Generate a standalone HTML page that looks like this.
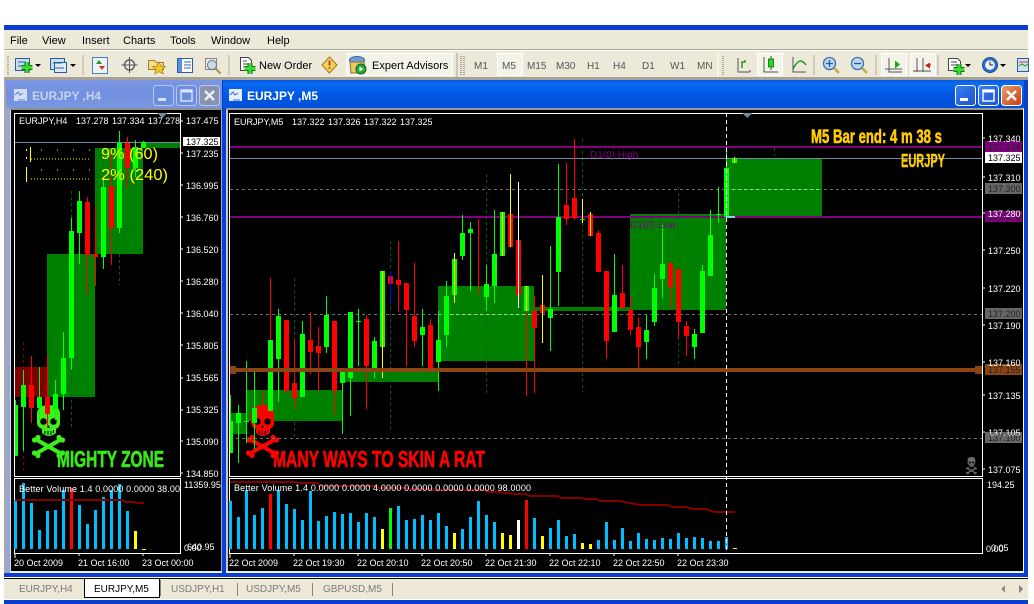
<!DOCTYPE html>
<html><head><meta charset="utf-8"><title>MetaTrader</title>
<style>
html,body{margin:0;padding:0;background:#fff;width:1034px;height:604px;overflow:hidden}
svg{display:block}
text{font-family:"Liberation Sans",sans-serif;white-space:pre}
.w{font-size:9px;fill:#fff}
.d{font-size:9px;fill:#222}
.m{font-size:11px;fill:#000}
.t{font-size:10px;fill:#555}
.tab{font-size:10px;fill:#7a7a7a}
.big{font-weight:bold}
</style></head><body>
<svg xmlns="http://www.w3.org/2000/svg" width="1034" height="604" viewBox="0 0 1034 604" shape-rendering="crispEdges">
<defs>
<linearGradient id="ga" x1="0" y1="0" x2="0" y2="1"><stop offset="0" stop-color="#0a58e0"/><stop offset=".12" stop-color="#0a6cf2"/><stop offset=".5" stop-color="#0058e6"/><stop offset="1" stop-color="#0450d8"/></linearGradient>
<linearGradient id="gi" x1="0" y1="0" x2="0" y2="1"><stop offset="0" stop-color="#7c96e2"/><stop offset=".5" stop-color="#7290e0"/><stop offset="1" stop-color="#7a96e0"/></linearGradient>
<linearGradient id="gb" x1="0" y1="0" x2="1" y2="1"><stop offset="0" stop-color="#3c7df0"/><stop offset="1" stop-color="#1a52d0"/></linearGradient>
<linearGradient id="gr" x1="0" y1="0" x2="1" y2="1"><stop offset="0" stop-color="#e8a070"/><stop offset="1" stop-color="#c83a10"/></linearGradient>
<clipPath id="c1"><rect x="15" y="114" width="165" height="362"/></clipPath>
<clipPath id="c2"><rect x="230" y="114" width="752" height="362"/></clipPath>
<g id="skull" shape-rendering="auto">
<path fill="currentColor" d="M5 9Q5 0 17 0Q28 0 28 9V18Q28 22 24 24V28Q17 34 10 28V24Q5 22 5 18Z"/>
<ellipse cx="11.500" cy="16.500" rx="3.200" ry="3.300" fill="#000"/><ellipse cx="21.500" cy="16.500" rx="3.200" ry="3.300" fill="#000"/>
<path d="M16.500 20l-1.500 3h3z" fill="#000"/>
<path d="M13 26v3M16 26v4M19 26v4M21.500 25v3" stroke="#000" stroke-width="1"/>
<path d="M5 35L28 48M28 35L5 48" stroke="currentColor" stroke-width="4"/>
<circle cx="2.500" cy="35" r="2.600" fill="currentColor"/><circle cx="6" cy="32.500" r="2.600" fill="currentColor"/>
<circle cx="30.500" cy="35" r="2.600" fill="currentColor"/><circle cx="27" cy="32.500" r="2.600" fill="currentColor"/>
<circle cx="2.500" cy="48" r="2.600" fill="currentColor"/><circle cx="6" cy="50.500" r="2.600" fill="currentColor"/>
<circle cx="30.500" cy="48" r="2.600" fill="currentColor"/><circle cx="27" cy="50.500" r="2.600" fill="currentColor"/>
</g>
</defs>

<rect width="1034" height="604" fill="#fff"/>
<!-- app frame -->
<rect x="4" y="25" width="1024" height="5" fill="#0a3ccf"/>
<rect x="4" y="30" width="1024" height="570" fill="#ece9d8"/>
<rect x="4" y="600" width="1024" height="4" fill="#0a3ccf"/>
<rect x="4" y="49" width="1024" height="1" fill="#aca899"/>
<rect x="4" y="50" width="1024" height="1" fill="#fff"/>
<!-- menu -->
<text class="m" x="10" y="44">File</text><text class="m" x="42" y="44">View</text><text class="m" x="82" y="44">Insert</text><text class="m" x="123" y="44">Charts</text><text class="m" x="170" y="44">Tools</text><text class="m" x="211" y="44">Window</text><text class="m" x="267" y="44">Help</text>

<!-- toolbar -->
<path d="M8 56v19M461 56v19M464 56v19M723 56v19" stroke="#aca899" stroke-width="2" stroke-dasharray="1 1"/>
<path d="M83 55v20M229 55v20M814 55v20M876 55v20M938 55v20" stroke="#b4b0a0"/>
<path d="M457 53v24" stroke="#aca899"/><path d="M718 52v25" stroke="#fff"/>
<rect x="346.500" y="53.500" width="106" height="22" fill="#f4f3ea" stroke="#fff"/>
<rect x="497.500" y="53.500" width="25" height="22" fill="#f4f3ea" stroke="#fff"/>
<rect x="757.500" y="53.500" width="25" height="22" fill="#f4f3ea" stroke="#fff"/>
<rect x="881.500" y="53.500" width="25" height="22" fill="#f4f3ea" stroke="#fff"/>
<rect x="910.500" y="53.500" width="25" height="22" fill="#f4f3ea" stroke="#fff"/>
<g shape-rendering="auto">
<!-- new chart -->
<rect x="15.500" y="58.500" width="14" height="12" fill="#c9ddf5" stroke="#25609f"/><path d="M18 62h8M18 66h8" stroke="#25609f"/>
<path d="M27 62v11M21.500 67.500h11" stroke="#0e7a0e" stroke-width="5"/><path d="M27 62v11M21.500 67.500h11" stroke="#3fd63f" stroke-width="3"/>
<path d="M35 64h6l-3 3z" fill="#000"/>
<!-- profiles -->
<rect x="50.500" y="58.500" width="14" height="11" fill="#c9ddf5" stroke="#25609f"/><rect x="54.500" y="62.500" width="12" height="10" fill="#dfeaf8" stroke="#25609f"/><path d="M53 63h9M55 68h9" stroke="#25609f"/>
<path d="M70 64h6l-3 3z" fill="#000"/>
<!-- market watch -->
<rect x="92.500" y="57.500" width="15" height="16" fill="#eef3fb" stroke="#4a80c0"/><path d="M96 64l3-4 3 4z" fill="#1a9a1a"/><path d="M99 70l3-4 3 4z" fill="#d83018" transform="rotate(180 102 68)"/>
<!-- crosshair -->
<circle cx="129.500" cy="65" r="5" fill="none" stroke="#666" stroke-width="1.500"/><path d="M129.500 57v16M121.500 65h16" stroke="#555"/>
<!-- folder star -->
<path d="M148.500 60.500h6l2 2h7v7h-15z" fill="#f5dd88" stroke="#a08030"/>
<path d="M159 62l2 4 4.500.5-3.300 3 1 4.500-4.200-2.300-4.200 2.300 1-4.500-3.300-3 4.500-.5z" fill="#f0c828" stroke="#a08020" stroke-width=".7"/>
<!-- navigator -->
<rect x="177.500" y="58.500" width="15" height="14" fill="#fff" stroke="#2c5fa5"/><rect x="178" y="59" width="4" height="13" fill="#5a90d8"/><path d="M184 62h7M184 65h7M184 68h7" stroke="#2c5fa5"/>
<!-- search chart -->
<rect x="205.500" y="58.500" width="11" height="11" fill="#dfe6f2" stroke="#888"/><circle cx="212" cy="65" r="4.500" fill="#c8daf0" stroke="#777"/><path d="M215.500 68.500l5 5" stroke="#a89040" stroke-width="2"/>
<!-- new order -->
<path d="M240.500 57.500h8l3 3v10h-11z" fill="#fff" stroke="#444"/><path d="M243 61h4M243 64h6M243 67h5" stroke="#444"/>
<path d="M250 63v11M244.500 68.500h11" stroke="#0e7a0e" stroke-width="5"/><path d="M250 63v11M244.500 68.500h11" stroke="#3fd63f" stroke-width="3"/>
<!-- diamond -->
<path d="M329.500 57l7.500 8-7.500 8-7.500-8z" fill="#f4d25a" stroke="#a07818"/><path d="M329.500 60.500v5" stroke="#c03010" stroke-width="1.800"/><circle cx="329.500" cy="68" r="1" fill="#c03010"/>
<!-- expert advisors -->
<ellipse cx="357" cy="60" rx="7.500" ry="3.500" fill="#6aa0d8" stroke="#386898"/><path d="M350 62h14l1 7-6 4h-8z" fill="#e8c868" stroke="#907030"/>
<circle cx="361" cy="69" r="5" fill="#28a838" stroke="#0a6a1a"/><path d="M359.500 66.500l4 2.500-4 2.500z" fill="#fff"/>
<!-- chart types -->
<path d="M738 58v14h12M750 70v2" stroke="#555" fill="none"/><path d="M742 68v-6h3v-2" stroke="#0a8a0a" stroke-width="1.300" fill="none"/>
<path d="M764 57v15h14" stroke="#555" fill="none"/><path d="M771 56v14" stroke="#444"/><rect x="768.500" y="59" width="5" height="8" fill="#22dc22" stroke="#0a6a0a" stroke-width=".8"/>
<path d="M793 57v15h13" stroke="#555" fill="none"/><path d="M793 69q5-9 8-8t5 4" stroke="#0a8a0a" stroke-width="1.200" fill="none"/>
<!-- zoom -->
<circle cx="829.500" cy="63.500" r="6" fill="#bcd8f4" stroke="#3a70b0" stroke-width="1.300"/><path d="M826 63.500h7M829.500 60v7" stroke="#2a5a90" stroke-width="1.300"/><path d="M834 68l5 5" stroke="#c8a848" stroke-width="2.500"/>
<circle cx="857.500" cy="63.500" r="6" fill="#bcd8f4" stroke="#3a70b0" stroke-width="1.300"/><path d="M854 63.500h7" stroke="#2a5a90" stroke-width="1.300"/><path d="M862 68l5 5" stroke="#c8a848" stroke-width="2.500"/>
<!-- shift -->
<path d="M889 58v14h13" stroke="#555" fill="none"/><path d="M885 69h17" stroke="#555"/><path d="M895 60.500l5 4-5 4z" fill="#1aa81a"/>
<path d="M917 58v14M923 58v14" stroke="#555"/><path d="M913 71h18" stroke="#555"/><path d="M931 64.500l-5-3v6z" fill="#c02020" transform="rotate(180 928 65)"/><path d="M926 65h5" stroke="#c02020"/>
<!-- new -->
<path d="M948.500 58.500h9l3 3v9h-12z" fill="#fff" stroke="#444"/><path d="M951 62h6M951 65h6" stroke="#444"/><path d="M959 64v11M953.500 69.500h11" stroke="#0e7a0e" stroke-width="5"/><path d="M959 64v11M953.500 69.500h11" stroke="#3fd63f" stroke-width="3"/>
<path d="M965 64h6l-3 3z" fill="#000"/>
<!-- clock -->
<circle cx="990" cy="65" r="7.500" fill="#2a70c8" stroke="#184a90"/><circle cx="990" cy="65" r="4.800" fill="#eef3fa"/><path d="M990 61.500V65h3" stroke="#222" fill="none"/>
<path d="M1000 64h6l-3 3z" fill="#000"/>
<rect x="1017.500" y="58.500" width="11" height="13" fill="#cfe0f5" stroke="#25609f"/><path d="M1019 62h9" stroke="#c04030"/><path d="M1019 66l3-2 3 2 3-2" stroke="#1a9a1a" fill="none"/>
</g>
<text class="m" x="259" y="69">New Order</text><text class="m" x="372" y="69">Expert Advisors</text>
<text class="t" x="474" y="69">M1</text><text class="t" x="502" y="69">M5</text><text class="t" x="527" y="69">M15</text><text class="t" x="556" y="69">M30</text><text class="t" x="587" y="69">H1</text><text class="t" x="613" y="69">H4</text><text class="t" x="642" y="69">D1</text><text class="t" x="670" y="69">W1</text><text class="t" x="697" y="69">MN</text>

<!-- mdi -->
<rect x="4" y="77" width="1024" height="3" fill="#a6a396"/>
<rect x="4" y="80" width="1024" height="493" fill="#9a9a9a"/>

<!-- left window -->
<rect x="4" y="80" width="218" height="497" fill="#94a6d8"/>
<rect x="4" y="86" width="2" height="491" fill="#a8a89e"/>
<rect x="6" y="80" width="216" height="28" fill="url(#gi)"/>
<rect x="10" y="108" width="212" height="2" fill="#8e8e8e"/>
<rect x="10" y="110" width="1" height="462" fill="#ddd"/>
<rect x="11" y="110" width="210" height="461" fill="#000"/>
<rect x="10" y="571" width="212" height="2" fill="#eee"/>
<g shape-rendering="auto">
<rect x="14" y="89" width="13" height="12" fill="#dfe8f8" opacity=".9"/><path d="M15 95l3-3 2 3 3-2M18 100h7" stroke="#5a80c8" fill="none"/>
<text x="32" y="100" class="big" font-size="12" fill="#c6d3f2" textLength="69" lengthAdjust="spacingAndGlyphs">EURJPY ,H4</text>
<rect x="153.500" y="85.500" width="20" height="20" rx="3" fill="#6c8edf" stroke="#b6c6ee"/><rect x="158" y="98" width="8" height="3" fill="#d8e2f6"/>
<rect x="176.500" y="85.500" width="20" height="20" rx="3" fill="#6c8edf" stroke="#b6c6ee"/><rect x="181" y="90" width="11" height="11" fill="none" stroke="#dde6f8" stroke-width="1.400"/><rect x="181" y="90" width="11" height="2.500" fill="#dde6f8"/>
<rect x="199.500" y="85.500" width="20" height="20" rx="3" fill="#8a93ad" stroke="#b6c6ee"/><path d="M205 91l9 9M214 91l-9 9" stroke="#eef1f8" stroke-width="2.400"/>
</g>

<!-- active window -->
<rect x="222" y="80" width="806" height="497" fill="#0a3fd0"/>
<rect x="223" y="80" width="801" height="28" fill="url(#ga)"/>
<rect x="226" y="108" width="798" height="2" fill="#999"/>
<rect x="226" y="110" width="2" height="462" fill="#c8c8c8"/>
<rect x="228" y="110" width="795" height="461" fill="#000"/>
<rect x="1023" y="108" width="1" height="465" fill="#fff"/>
<rect x="226" y="571" width="798" height="2" fill="#eee"/>
<g shape-rendering="auto">
<rect x="229" y="89" width="13" height="12" fill="#e8effa"/><path d="M230 95l3-3 2 3 3-2M233 100h7" stroke="#3a6ad0" fill="none"/>
<text x="247" y="100" class="big" font-size="12" fill="#fff" textLength="71" lengthAdjust="spacingAndGlyphs">EURJPY ,M5</text>
<rect x="955.500" y="85.500" width="20" height="20" rx="3" fill="url(#gb)" stroke="#fff"/><rect x="960" y="98" width="8" height="3" fill="#fff"/>
<rect x="978.500" y="85.500" width="20" height="20" rx="3" fill="url(#gb)" stroke="#fff"/><rect x="983" y="90" width="11" height="11" fill="none" stroke="#fff" stroke-width="1.400"/><rect x="983" y="90" width="11" height="2.500" fill="#fff"/>
<rect x="1001.500" y="85.500" width="20" height="20" rx="3" fill="url(#gr)" stroke="#fff"/><path d="M1007 91l9 9M1016 91l-9 9" stroke="#fff" stroke-width="2.400"/>
</g>

<!-- H4 chart -->
<g clip-path="url(#c1)">
<rect x="47" y="254" width="48" height="143" fill="#008000"/>
<rect x="95" y="148" width="48" height="106" fill="#008000"/>
<rect x="143" y="143" width="37" height="5" fill="#008000"/>
<rect x="15" y="367" width="32" height="30" fill="#7f0000"/>
<use href="#skull" x="32" y="405" color="#3cf01a" shape-rendering="auto"/>
<path d="M15 142.500h165" stroke="#778899"/>
<path d="M23.500 342V472" stroke="#800000" stroke-dasharray="3 3"/>
<path d="M71.500 191V218M71.500 358V430M119.500 254V285" stroke="#006400" stroke-dasharray="3 3"/>
<g fill="none">
<path stroke="#00ff00" d="M15.500 400V456M23.500 370V451M39.500 367V420M55.500 380V420M63.500 332V410M71.500 218V370M79.500 191V264M103.500 179V269M119.500 131V233M135.500 140V177M143.500 141V148"/>
<path stroke="#ff0000" d="M31.500 356V423M47.500 355V428M87.500 197V294M95.500 207V286M111.500 150V265M127.500 137V188"/>
<path stroke="#00ff00" stroke-width="5" d="M15.500 405V456M23.500 385V407M39.500 397V408M55.500 394V410M63.500 358V394M71.500 231V358M79.500 201V233M103.500 187V257M119.500 143V228M135.500 147V168M143.500 142V148"/>
<path stroke="#ff0000" stroke-width="5" d="M31.500 385V408M47.500 397V414M87.500 202V255M95.500 254V257M111.500 186V228M127.500 143V168"/>
</g>
</g>
<rect x="14.500" y="113.500" width="166" height="363" fill="none" stroke="#fff"/>
<path d="M157 113h10l-5 5z" fill="#778899"/>
<g shape-rendering="auto">
<text x="101" y="159" font-size="16" fill="#ffff00" textLength="57" lengthAdjust="spacingAndGlyphs">9% (60)</text>
<text x="101" y="180" font-size="16" fill="#ffff00" textLength="67" lengthAdjust="spacingAndGlyphs">2% (240)</text>
</g>
<path d="M30.500 147v15" stroke="#ffff00"/><path d="M26.500 149v2M26.500 157v2M26.500 167v15" stroke="#ffff00"/>
<path d="M31 159h60M31 179h60" stroke="#ffff00" stroke-dasharray="1 2"/>
<path d="M41 150h1M57 150h1M73 150h1M89 150h1M41 170h1M57 170h1M73 170h1M89 170h1" stroke="#ffff00"/>
<g shape-rendering="auto">
<text x="19" y="124" class="w">EURJPY,H4</text>
<text x="76" y="124" class="w">137.278</text><text x="112" y="124" class="w">137.334</text>
<text x="148" y="124" class="w" textLength="32" lengthAdjust="spacingAndGlyphs">137.278</text>
<text x="57" y="467" class="big" font-size="23" fill="#38e818" stroke="#38e818" stroke-width=".6" textLength="107" lengthAdjust="spacingAndGlyphs">MIGHTY ZONE</text>
</g>
<path d="M180 121h3M180 153h3M180 185h3M180 217h3M180 249h3M180 281h3M180 313h3M180 345h3M180 378h3M180 410h3M180 441h3M180 473h3" stroke="#fff"/>
<g shape-rendering="auto">
<text class="w" x="186" y="124">137.475</text><text class="w" x="186" y="157">137.235</text><text class="w" x="186" y="189">136.995</text><text class="w" x="186" y="221">136.760</text><text class="w" x="186" y="253">136.520</text><text class="w" x="186" y="285">136.280</text><text class="w" x="186" y="317">136.040</text><text class="w" x="186" y="349">135.805</text><text class="w" x="186" y="381">135.565</text><text class="w" x="186" y="413">135.325</text><text class="w" x="186" y="445">135.090</text><text class="w" x="186" y="477">134.850</text>
</g>
<rect x="183" y="137" width="37" height="9" fill="#fff"/>
<text class="d" x="186" y="145" shape-rendering="auto" style="fill:#000">137.325</text>
<!-- H4 volume -->
<rect x="14.500" y="478.500" width="166" height="75" fill="none" stroke="#fff"/>
<path fill="none" stroke-width="3" stroke="#00bfff" d="M15.500 500V549M23.500 483V549M31.500 503V549M39.500 530V549M47.500 511V549M55.500 510V549M63.500 490V549M79.500 505V549M87.500 524V549M95.500 510V549M103.500 497V549M111.500 490V549M119.500 484V549M127.500 511V549"/>
<path stroke="#ff0000" stroke-width="3" d="M71.500 488V549"/>
<path stroke="#ffff00" stroke-width="3" d="M135.500 531V549"/>
<path stroke="#ffff00" d="M142 549.500h4"/>
<path d="M15 500h107l3 2h10l2 1h7" fill="none" stroke="#800000" stroke-width="2"/>
<path d="M15 553v5M79 553v3M143 553v3" stroke="#fff"/>
<g shape-rendering="auto">
<text class="w" x="19" y="492" textLength="161" lengthAdjust="spacing">Better Volume 1.4 0.0000 0.0000 38.00</text>
<text class="w" x="184" y="488">11359.95</text>
<text class="w" x="187" y="550">640.95</text><text class="w" x="184" y="551">0.00</text>
<text class="w" x="14" y="566">20 Oct 2009</text><text class="w" x="78" y="566">21 Oct 16:00</text><text class="w" x="142" y="566">23 Oct 00:00</text>
</g>

<!-- M5 chart -->
<g clip-path="url(#c2)">
<g fill="#008000">
<rect x="230" y="413" width="17" height="21"/><rect x="247" y="390" width="95" height="31"/><rect x="342" y="372" width="96" height="10"/><rect x="438" y="286" width="96" height="75"/><rect x="534" y="307" width="96" height="4"/><rect x="630" y="214" width="96" height="96"/><rect x="726" y="159" width="96" height="57"/>
</g>
<use href="#skull" x="246" y="405" color="#ff0000" shape-rendering="auto"/>
<path d="M294.500 278V440M390.500 241V433M486.500 174V395M582.500 139V392M678.500 187V367M774.500 148V156" stroke="#006400" stroke-dasharray="3 3"/>
<path d="M230 147h752M230 217h752" stroke="#800080" stroke-width="2"/>
<path d="M230 158.500h752" stroke="#778899"/>
<path d="M230 189.500h752M230 314.500h752M230 438.500h752" stroke="#707070" stroke-dasharray="3 3"/>
<path d="M726 189.500h96M438 314.500h96" stroke="#70ff70" stroke-dasharray="3 3"/>
<g fill="none">
<path stroke="#00ff00" d="M230.500 395V453M238.500 405V463M246.500 361V443M254.500 371V449M278.500 309V402M302.500 321V397M326.500 296V353M342.500 371V434M350.500 312V416M358.500 309V366M374.500 337V378M422.500 309V366M438.500 311V391M446.500 281V347M462.500 215V260M470.500 222V291M486.500 265V311M494.500 210V303M550.500 246V351M558.500 164V306M614.500 254V332M646.500 315V359M654.500 274V326M662.500 225V298M694.500 329V359M702.500 265V333M710.500 210V276M718.500 187V223M726.500 147V217M244 421.500h5M356 321.500h5M580 219.500h5M716 214.500h5"/>
<path stroke="#ff0000" d="M262.500 391V410M270.500 278V411M294.500 339V409M310.500 312V374M318.500 327V391M334.500 321V415M366.500 315V409M398.500 241V312M406.500 283V366M414.500 263V347M430.500 319V373M478.500 219V295M526.500 296V396M534.500 296V393M566.500 163V225M574.500 139V220M598.500 230V272M606.500 271V359M622.500 265V308M630.500 296V335M638.500 317V368M670.500 263V308M678.500 269V338M686.500 321V356"/>
<path stroke="#00ff00" stroke-width="5" d="M230.500 421V453M238.500 413V423M254.500 408V423M270.500 340V411M278.500 316V359M302.500 334V397M326.500 315V347M342.500 371V383M350.500 312V378M374.500 341V372M382.500 271V347M422.500 327V335M438.500 340V362M446.500 296V335M454.500 259V295M462.500 233V256M470.500 229V233M486.500 284V297M494.500 254V286M502.500 212V256M526.500 286V311M550.500 309V318M558.500 217V272M614.500 295V332M646.500 330V342M654.500 288V322M662.500 264V279M694.500 334V347M702.500 271V333M710.500 235V276M726.500 168V217M734.500 158V163"/>
<path stroke="#ff0000" stroke-width="5" d="M286.500 320V391M294.500 383V398M310.500 340V352M318.500 346V353M334.500 321V391M366.500 319V366M390.500 276V284M398.500 280V285M406.500 283V310M414.500 316V341M430.500 325V369M510.500 214V247M518.500 240V295M534.500 311V328M542.500 305V313M566.500 205V219M574.500 198V218M590.500 214V236M598.500 233V272M606.500 271V341M622.500 293V308M630.500 310V330M638.500 327V347M670.500 263V287M678.500 269V322M686.500 326V336"/>
<path stroke="#ffff00" d="M382.500 271V378M454.500 253V303M502.500 212V256M510.500 174V247M526.500 286V311M542.500 275V343M582.500 199V223M590.500 212V236M734.500 157V163"/>
<path stroke="#fff" d="M518.500 182V308"/><path stroke="#0000ff" d="M390.500 271V303"/>
<path stroke="#00ff00" d="M580 219.500h5"/>
<path d="M726 217h9" stroke="#87ceeb" stroke-width="2"/>
</g>
<path d="M230 370h752" stroke="#8b4513" stroke-width="4"/>
<rect x="230" y="366" width="6" height="8" fill="#8b4513"/><rect x="975" y="366" width="7" height="8" fill="#8b4513"/>
<path d="M726.500 113V476" stroke="#fff" stroke-dasharray="4 3"/>
<use href="#skull" transform="translate(966 457) scale(.33)" color="#6e6e6e" shape-rendering="auto"/>
</g>
<rect x="229.500" y="113.500" width="753" height="363" fill="none" stroke="#fff"/>
<path d="M742 113h10l-5 5z" fill="#778899"/>
<g shape-rendering="auto">
<text class="w" x="234" y="125">EURJPY,M5</text><text class="w" x="292" y="125">137.322</text><text class="w" x="328" y="125">137.326</text><text class="w" x="364" y="125">137.322</text><text class="w" x="400" y="125">137.325</text>
<text x="590" y="158" font-size="10" fill="#800080">D1(0) High</text>
<text x="630" y="228" font-size="10" fill="#800080">D1(0) Low</text>
<text x="811" y="143" class="big" font-size="19" fill="#ffcc00" stroke="#ffcc00" stroke-width=".6" textLength="131" lengthAdjust="spacingAndGlyphs">M5 Bar end: 4 m 38 s</text>
<text x="901" y="167" class="big" font-size="18" fill="#ffcc00" stroke="#ffcc00" stroke-width=".4" textLength="44" lengthAdjust="spacingAndGlyphs">EURJPY</text>
<text x="273" y="467" class="big" font-size="23" fill="#ff0000" stroke="#ff0000" stroke-width=".6" textLength="212" lengthAdjust="spacingAndGlyphs">MANY WAYS TO SKIN A RAT</text>
</g>
<path d="M982 138h3M982 177h3M982 213h3M982 250h3M982 288h3M982 325h3M982 362h3M982 395h3M982 432h3M982 469h3" stroke="#fff"/>
<rect x="985" y="141" width="37" height="11" fill="#800080"/>
<rect x="985" y="152" width="37" height="11" fill="#fff"/>
<rect x="985" y="183" width="37" height="11" fill="#666"/>
<rect x="985" y="211" width="37" height="11" fill="#800080"/>
<rect x="985" y="308" width="37" height="11" fill="#666"/>
<rect x="985" y="364" width="37" height="11" fill="#8b4513"/>
<rect x="985" y="432" width="37" height="11" fill="#666"/>
<g shape-rendering="auto">
<text class="w" x="988" y="142">137.340</text>
<text class="d" x="988" y="150">137.334</text>
<text class="d" x="988" y="161" style="fill:#000">137.325</text>
<text class="w" x="988" y="181">137.310</text>
<text class="d" x="988" y="192">137.300</text>
<text class="d" x="988" y="220">137.270</text>
<text class="w" x="988" y="217">137.280</text>
<text class="w" x="988" y="254">137.250</text>
<text class="w" x="988" y="292">137.220</text>
<text class="d" x="988" y="317">137.200</text>
<text class="w" x="988" y="329">137.190</text>
<text class="w" x="988" y="366">137.160</text>
<text class="d" x="988" y="373">137.155</text>
<text class="w" x="988" y="399">137.135</text>
<text class="w" x="988" y="436">137.105</text>
<text class="d" x="988" y="441">137.100</text>
<text class="w" x="988" y="473">137.075</text>
</g>

<!-- M5 volume -->
<rect x="229.500" y="478.500" width="753" height="75" fill="none" stroke="#fff"/>
<path fill="none" stroke-width="3" stroke="#00bfff" d="M230.500 501V549M238.500 517V549M246.500 490V549M254.500 515V549M262.500 508V549M278.500 490V549M286.500 504V549M294.500 509V549M302.500 520V549M310.500 491V549M318.500 521V549M326.500 516V549M334.500 512V549M342.500 514V549M350.500 513V549M358.500 522V549M366.500 513V549M374.500 517V549M398.500 506V549M406.500 520V549M414.500 519V549M422.500 515V549M430.500 520V549M438.500 513V549M446.500 526V549M462.500 529V549M470.500 517V549M478.500 501V549M486.500 515V549M494.500 522V549M534.500 518V549M550.500 528V549M558.500 520V549M566.500 536V549M574.500 534V549M598.500 540V549M606.500 522V549M614.500 540V549M622.500 528V549M630.500 541V549M638.500 533V549M646.500 539V549M654.500 540V549M662.500 538V549M670.500 539V549M678.500 533V549M686.500 538V549M694.500 537V549M702.500 538V549M710.500 541V549M718.500 541V549M726.500 537V549"/>
<path fill="none" stroke-width="3" stroke="#ff0000" d="M270.500 494V549M526.500 500V549"/>
<path fill="none" stroke-width="3" stroke="#ffff00" d="M382.500 529V549M454.500 533V549M502.500 533V549M510.500 535V549M542.500 536V549M582.500 543V549M590.500 544V549"/>
<path stroke-width="3" stroke="#00ff00" d="M390.500 508V549"/>
<path stroke-width="3" stroke="#fff" d="M518.500 520V549"/>
<path stroke="#ffff00" d="M733 548.500h4"/>
<path d="M230 482H295L300 483H317L320 486H375L378 488H405L410 489H430L433 490H484L487 492H500L505 493H510L515 494H525L530 496H558L561 498H580L585 499H597L600 501H620L640 505H668L672 507H687L692 509H705L715 512H735" fill="none" stroke="#800000" stroke-width="2" />
<path d="M726.500 476V553" stroke="#fff" stroke-dasharray="4 3"/>
<path d="M230 553v5M294 553v3M358 553v3M422 553v3M486 553v3M550 553v3M614 553v3M678 553v3" stroke="#fff"/>
<g shape-rendering="auto">
<text class="w" x="234" y="491" textLength="297" lengthAdjust="spacing">Better Volume 1.4 0.0000 0.0000 4.0000 0.0000 0.0000 0.0000 98.0000</text>
<text class="w" x="987" y="488">194.25</text>
<text class="w" x="986" y="552">0.00</text><text class="w" x="991" y="551">0.05</text>
<text class="w" x="229" y="566">22 Oct 2009</text><text class="w" x="293" y="566">22 Oct 19:30</text><text class="w" x="357" y="566">22 Oct 20:10</text><text class="w" x="421" y="566">22 Oct 20:50</text><text class="w" x="485" y="566">22 Oct 21:30</text><text class="w" x="549" y="566">22 Oct 22:10</text><text class="w" x="613" y="566">22 Oct 22:50</text><text class="w" x="677" y="566">22 Oct 23:30</text>
</g>

<!-- tab bar -->
<rect x="4" y="573" width="1024" height="4" fill="#0a3fd0"/>
<rect x="4" y="577" width="1024" height="1" fill="#fff"/>
<rect x="4" y="578" width="1024" height="1" fill="#000"/>
<rect x="4" y="579" width="1024" height="21" fill="#ece9d8"/>
<rect x="4" y="599" width="1024" height="1" fill="#fff"/>
<rect x="84.500" y="578.500" width="75" height="19" fill="#fff" stroke="#000"/>
<path d="M160.500 580v16M237.500 583v13M312.500 583v13M392.500 583v13" stroke="#8a8778"/>
<g shape-rendering="auto">
<text class="tab" x="19" y="592">EURJPY,H4</text>
<text x="94" y="592" font-size="10" fill="#000">EURJPY,M5</text>
<text class="tab" x="171" y="592">USDJPY,H1</text>
<text class="tab" x="246" y="592">USDJPY,M5</text>
<text class="tab" x="323" y="592">GBPUSD,M5</text>
</g>
<path d="M1005 585v8l-4-4zM1019 585v8l4-4z" fill="#888"/>
</svg>
</body></html>
